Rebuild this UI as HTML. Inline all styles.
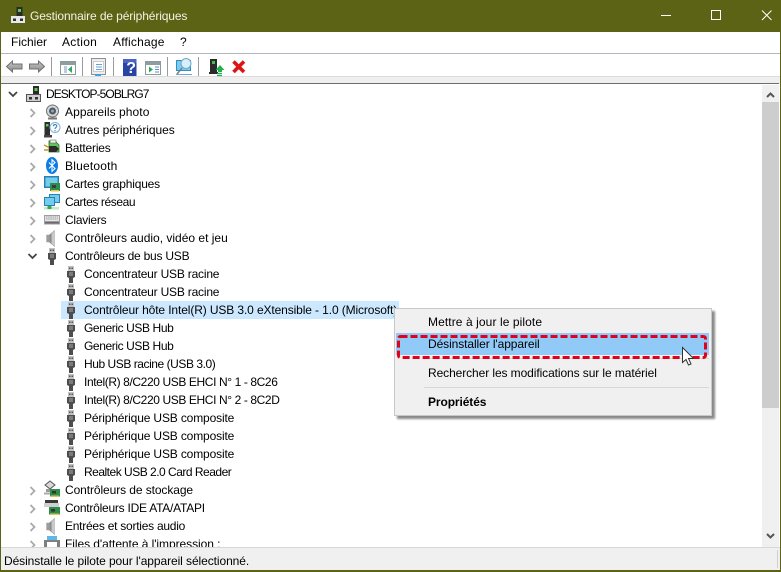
<!DOCTYPE html>
<html lang="fr"><head><meta charset="utf-8"><title>Gestionnaire de périphériques</title>
<style>
*{box-sizing:border-box}
html,body{margin:0;padding:0;width:781px;height:572px;overflow:hidden;background:#fff}
body{position:relative;font:12px/16px "Liberation Sans",sans-serif;color:#000}
.a{position:absolute}
.t{position:absolute;white-space:nowrap;line-height:16px;height:16px}
svg{position:absolute;overflow:visible}
</style></head><body>
<svg width="0" height="0" style="position:absolute"><defs>
<linearGradient id="ga" x1="0" y1="0" x2="0" y2="1"><stop offset="0" stop-color="#c4c4c4"/><stop offset="1" stop-color="#8c8c8c"/></linearGradient>
<symbol id="usb" viewBox="0 0 16 17"><path d="M5 0h6v6H5z" fill="#c2c2c2"/><path d="M6 1.500h1.500v1.500H6zM8.500 1.500H10v1.500H8.500z" fill="#555"/><path d="M4 5h8v6l-2 1v5H6v-5l-2-1z" fill="#4d4d4d"/><path d="M6 6h4v4H6z" fill="#7b7b7b"/></symbol>
<symbol id="spk" viewBox="0 0 16 18"><path d="M2 5h3v8H2z" fill="#9c9c9c"/><path d="M5 5l6-5v18l-6-5z" fill="#8b8b8b"/><path d="M7.500 3.500L11 .500v17l-3.500-3z" fill="#c9c9c9"/></symbol>
</defs></svg>

<!-- window frame -->
<div class="a" style="left:0;top:0;width:781px;height:32px;background:#5d6314"></div>
<div class="a" style="left:0;top:0;width:1px;height:572px;background:#5d6314"></div>
<div class="a" style="left:780px;top:0;width:1px;height:572px;background:#5d6314"></div>
<div class="a" style="left:0;top:570px;width:781px;height:2px;background:#5d6314"></div>
<svg style="left:10px;top:7px" width="16" height="16"><path d="M6.500 0h6v9h-6z" fill="#2a2a2a"/><path d="M8 2h3v3H8z" fill="#5fc850"/><path d="M1 9h14v7H1z" fill="#e8e8e8"/><path d="M3 11.500h3v2.500H3zM10 11.500h3v2.500h-3z" fill="#333"/></svg>
<div class="t" style="left:30px;top:8px;color:#f2f3e4;letter-spacing:-.12px">Gestionnaire de périphériques</div>
<svg style="left:660px;top:8px" width="110" height="16" fill="none" stroke="#fff"><path d="M1 7.500h10M51.500 2.500h9v9h-9zM102 2.500l9.500 9.500M111.500 2.500l-9.500 9.500"/></svg>

<!-- menu -->
<div class="a" style="left:1px;top:53px;width:779px;height:1px;background:#b5b5c0"></div>
<div class="t" style="left:11px;top:34px">Fichier</div>
<div class="t" style="left:62px;top:34px;letter-spacing:.3px">Action</div>
<div class="t" style="left:113px;top:34px;letter-spacing:.2px">Affichage</div>
<div class="t" style="left:180px;top:34px">?</div>

<!-- toolbar -->
<div class="a" style="left:1px;top:76px;width:779px;height:8px;background:#efefef;border-top:1px solid #dcdcdc"></div>
<div class="a" style="left:1px;top:83px;width:778px;height:1px;background:#6d6d6d"></div>
<svg style="left:0;top:54px" width="260" height="24">
<path d="M6.500 12.500l6-5.500v3h9.500v5h-9.500v3z" fill="url(#ga)" stroke="#707070"/>
<path d="M44.500 12.500l-6-5.500v3H29.500v5h9v3z" fill="url(#ga)" stroke="#707070"/>
<path d="M51.500 3v19M82.500 3v19M113.500 3v19M167.500 3v19M198.500 3v19" stroke="#9a9a9a"/>
<path d="M60.500 7.500h15v13h-15z" fill="#fff" stroke="#8a9a9a"/><path d="M61 8h14v3H61z" fill="#8f9ca0"/><path d="M64 12h3v7h-3z" fill="#bcd"/><path d="M72 12l-4 3.500 4 3.500z" fill="#2fa85a"/>
<path d="M91.500 4.500h14v16h-14z" fill="#eee" stroke="#8f8f8f"/><path d="M93.500 7.500h10v10h-10z" fill="#fff" stroke="#ccc"/><path d="M96 10.500h6M96 13h6M96 15.500h6" stroke="#6a9fd8"/><path d="M95 20h6v2h-6z" fill="#35a4ea"/>
<path d="M123 5h13.500v17H123z" fill="#2a44a4"/><path d="M123 5h13.500v4H123z" fill="#4a66c4"/><text x="126.300" y="19" font-family="Liberation Sans,sans-serif" font-size="16" font-weight="bold" fill="#fff">?</text>
<path d="M145.500 7.500h15v13h-15z" fill="#fff" stroke="#8a9a9a"/><path d="M146 8h14v3h-14z" fill="#8f9ca0"/><path d="M149 12.500l4 3-4 3z" fill="#2fa85a"/><path d="M155 13h4M155 15.500h4M155 18h4" stroke="#5a8fc8"/>
<path d="M176.500 6.500h14v10h-14z" fill="#7fcbf0" stroke="#2f8fc0"/><circle cx="186" cy="9.500" r="5" fill="#d8eefa" stroke="#6fa9c4"/><path d="M182 14l-5 6" stroke="#70808a" stroke-width="1.500"/><path d="M176 20.500h16" stroke="#70a8c8"/>
<path d="M210 5h7v13h-7z" fill="#2b2b2b"/><path d="M212 7h3v3h-3z" fill="#3ec24a"/><path d="M209 18h9v2h-9z" fill="#2b2b2b"/><path d="M220 11l4.500 5H222v2h-4v-2h-2.500z" fill="#22b14c"/><path d="M217 19.500h5M217 21.500h5" stroke="#22b14c" stroke-width="1.200"/>
<path d="M233.500 7.500l10.500 10.500M244 7.500l-10.500 10.500" stroke="#dc1414" stroke-width="3.600"/>
</svg>

<!-- tree -->
<div class="a" style="left:61px;top:301px;width:338px;height:18px;background:#cce8ff"></div>
<svg style="left:9px;top:90px" width="10" height="10"><path d="M0 2l4 4 4-4" fill="none" stroke="#444" stroke-width="1.800"/></svg>
<svg style="left:26px;top:86px" width="16" height="16"><path d="M7 0h6v9H7z" fill="#2a2a2a"/><path d="M8.500 2h3v3h-3z" fill="#5fc850"/><path d="M.5 8.500h14v7H.5z" fill="#cfcfcf" stroke="#555"/><path d="M3 11h3v2.500H3zM9 11h3v2.500H9z" fill="#333"/></svg>
<div class="t" style="left:46px;top:86px;letter-spacing:-.93px">DESKTOP-5OBLRG7</div>

<!-- chevrons -->
<svg style="left:27px;top:104px" width="10" height="450"><g fill="none" stroke="#aaa" stroke-width="1.800"><path d="M3.500 5l4 4-4 4M3.500 23l4 4-4 4M3.500 41l4 4-4 4M3.500 59l4 4-4 4M3.500 77l4 4-4 4M3.500 95l4 4-4 4M3.500 113l4 4-4 4M3.500 131l4 4-4 4M3.500 383l4 4-4 4M3.500 401l4 4-4 4M3.500 419l4 4-4 4M3.500 437l4 4-4 4"/></g><path d="M1.500 150l4 4 4-4" fill="none" stroke="#444" stroke-width="1.800"/></svg>

<!-- category icons -->
<svg style="left:44px;top:104px" width="17" height="16"><circle cx="8.500" cy="7" r="6" fill="#d6d6d6" stroke="#707070"/><circle cx="8.500" cy="7" r="3.500" fill="#4a5a66"/><circle cx="8.500" cy="7" r="1.500" fill="#8fa5b5"/><path d="M4 13.500h9v2H4z" fill="#777"/></svg>
<svg style="left:44px;top:122px" width="17" height="16"><path d="M.5 0H6v13H.5z" fill="#2d2d2d"/><path d="M2 2h2.500v2.500H2z" fill="#5fc850"/><path d="M0 13h8v2.500H0z" fill="#444"/><circle cx="11" cy="5.500" r="5" fill="#fff" stroke="#7ab3d8"/><path d="M9.300 4.300c0-2.300 3.500-2.300 3.500-.2 0 1.300-1.800 1.300-1.800 2.900M11 8v1.200" fill="none" stroke="#3f7fb8" stroke-width="1.100"/></svg>
<svg style="left:44px;top:139px" width="17" height="17"><path d="M5 2l7 1 3 3v7H5z" fill="#5fc65a" stroke="#2f6b2f" stroke-width=".8"/><path d="M6 1h6v3H6z" fill="#e8f5e0" stroke="#555" stroke-width=".6"/><path d="M0 6l6 3M0 11h6" stroke="#c09a20" stroke-width="1.500"/><path d="M5 7h7l3 3-3 3H5z" fill="#2b2b2b"/></svg>
<svg style="left:46px;top:157px" width="13" height="17"><ellipse cx="6" cy="8.500" rx="6" ry="8.500" fill="#0a7ee6"/><path d="M3 5.500l6 6-3 2.800V2.700l3 2.800-6 6" fill="none" stroke="#fff" stroke-width="1.100"/></svg>
<svg style="left:44px;top:176px" width="17" height="16"><path d="M0 0h15v12H0z" fill="#2a82b4"/><path d="M1.500 1.500h12v9h-12z" fill="#75cdee"/><path d="M6 12h3v2H6z" fill="#888"/><path d="M6 7h10v8H6z" fill="#2e8d4a"/><path d="M8 9h4v3H8z" fill="#3b3b3b"/><path d="M7 14h8v1.500H7z" fill="#e3c34d"/></svg>
<svg style="left:44px;top:194px" width="17" height="17"><path d="M5 0h11v9H5z" fill="#2a82b4"/><path d="M6 1h9v7H6z" fill="#75cdee"/><path d="M0 3h11v9H0z" fill="#2a82b4"/><path d="M1 4h9v7H1z" fill="#75cdee"/><path d="M0 13h15v2.500H0z" fill="#c9e8c9"/><path d="M3.500 12h4v3h-4z" fill="#34a853"/></svg>
<svg style="left:44px;top:214px" width="17" height="11"><path d="M0 1h16v9.500H0z" fill="#9d9d9d"/><path d="M1 2h14v5H1z" fill="#e6e6e6"/><path d="M2 3h12M2 5h12" stroke="#999" stroke-dasharray="1.500 .7"/><path d="M1 8h14v1.500H1z" fill="#6a6a6a"/></svg>
<svg style="left:46px;top:230px" width="12" height="17"><use href="#spk" width="16" height="17" x="-2"/></svg>
<svg style="left:44px;top:248px" width="16" height="17"><use href="#usb" width="16" height="17"/></svg>
<svg style="left:44px;top:481px" width="17" height="17"><path d="M1 4l5-4 5 4-5 4z" fill="#d8d8d8" stroke="#555"/><path d="M2 8h5v3H2z" fill="#999"/><path d="M0 11.500h6v2H0z" fill="#aaa"/><path d="M6 8h10v7.500H6z" fill="#2e8d4a"/><path d="M8 10h4v2.500H8z" fill="#333"/><path d="M7 14.500h8v1.500H7z" fill="#e3c34d"/></svg>
<svg style="left:44px;top:499px" width="17" height="17"><path d="M1 1h13v3H1z" fill="#3a3a3a"/><path d="M0 4h15v4H0z" fill="#cfcfcf"/><path d="M5 8h11v7.500H5z" fill="#2e8d4a"/><path d="M7 10h4v2.500H7z" fill="#333"/><path d="M6 14.500h9v1.500H6z" fill="#e3c34d"/></svg>
<svg style="left:46px;top:518px" width="12" height="17"><use href="#spk" width="16" height="17" x="-2"/></svg>
<svg style="left:44px;top:536px" width="16" height="11"><path d="M3 0h10v4H3z" fill="#5cb8e8"/><path d="M0 4h16v7H0z" fill="#7f7f7f"/><path d="M3 6h10v5H3z" fill="#fff"/></svg>

<!-- usb child icons -->
<svg style="left:63px;top:266px" width="16" height="216"><use href="#usb" y="0" width="16" height="17"/><use href="#usb" y="18" width="16" height="17"/><use href="#usb" y="36" width="16" height="17"/><use href="#usb" y="54" width="16" height="17"/><use href="#usb" y="72" width="16" height="17"/><use href="#usb" y="90" width="16" height="17"/><use href="#usb" y="108" width="16" height="17"/><use href="#usb" y="126" width="16" height="17"/><use href="#usb" y="144" width="16" height="17"/><use href="#usb" y="162" width="16" height="17"/><use href="#usb" y="180" width="16" height="17"/><use href="#usb" y="198" width="16" height="17"/></svg>

<div class="t" style="left:65px;top:104px;letter-spacing:.07px">Appareils photo</div>
<div class="t" style="left:65px;top:122px;letter-spacing:-.05px">Autres périphériques</div>
<div class="t" style="left:65px;top:140px;letter-spacing:-.2px">Batteries</div>
<div class="t" style="left:65px;top:158px;letter-spacing:.2px">Bluetooth</div>
<div class="t" style="left:65px;top:176px;letter-spacing:-.18px">Cartes graphiques</div>
<div class="t" style="left:65px;top:194px;letter-spacing:-.4px">Cartes réseau</div>
<div class="t" style="left:65px;top:212px;letter-spacing:-.25px">Claviers</div>
<div class="t" style="left:65px;top:230px">Contrôleurs audio, vidéo et jeu</div>
<div class="t" style="left:65px;top:248px;letter-spacing:-.23px">Contrôleurs de bus USB</div>
<div class="t" style="left:84px;top:266px;letter-spacing:-.2px">Concentrateur USB racine</div>
<div class="t" style="left:84px;top:284px;letter-spacing:-.2px">Concentrateur USB racine</div>
<div class="t" style="left:84px;top:302px;letter-spacing:-.115px">Contrôleur hôte Intel(R) USB 3.0 eXtensible - 1.0 (Microsoft)</div>
<div class="t" style="left:84px;top:320px;letter-spacing:-.4px">Generic USB Hub</div>
<div class="t" style="left:84px;top:338px;letter-spacing:-.4px">Generic USB Hub</div>
<div class="t" style="left:84px;top:356px;letter-spacing:-.45px">Hub USB racine (USB 3.0)</div>
<div class="t" style="left:84px;top:374px;letter-spacing:-.39px">Intel(R) 8/C220 USB EHCI N° 1 - 8C26</div>
<div class="t" style="left:84px;top:392px;letter-spacing:-.39px">Intel(R) 8/C220 USB EHCI N° 2 - 8C2D</div>
<div class="t" style="left:84px;top:410px;letter-spacing:-.15px">Périphérique USB composite</div>
<div class="t" style="left:84px;top:428px;letter-spacing:-.15px">Périphérique USB composite</div>
<div class="t" style="left:84px;top:446px;letter-spacing:-.15px">Périphérique USB composite</div>
<div class="t" style="left:84px;top:464px;letter-spacing:-.5px">Realtek USB 2.0 Card Reader</div>
<div class="t" style="left:65px;top:482px;letter-spacing:-.09px">Contrôleurs de stockage</div>
<div class="t" style="left:65px;top:500px;letter-spacing:-.24px">Contrôleurs IDE ATA/ATAPI</div>
<div class="t" style="left:65px;top:518px;letter-spacing:-.25px">Entrées et sorties audio</div>
<div class="t" style="left:65px;top:536px;height:11px;overflow:hidden;letter-spacing:-.06px">Files d'attente à l'impression :</div>

<!-- scrollbar -->
<div class="a" style="left:762px;top:85px;width:17px;height:462px;background:#f0f0f0"></div>
<div class="a" style="left:762px;top:102px;width:17px;height:306px;background:#cdcdcd"></div>
<svg style="left:762px;top:85px" width="17" height="462" fill="none" stroke="#555" stroke-width="2"><path d="M5 12l3.500-3.500L12 12M5 449l3.500 3.500L12 449"/></svg>

<!-- status bar -->
<div class="a" style="left:1px;top:547px;width:779px;height:23px;background:#f0f0f0;border-top:1px solid #d7d7d7"></div>
<div class="a" style="left:777px;top:550px;width:1px;height:18px;background:#d0d0d0"></div>
<div class="t" style="left:4px;top:553px;letter-spacing:-.08px">Désinstalle le pilote pour l'appareil sélectionné.</div>

<!-- context menu -->
<div class="a" style="left:394px;top:308px;width:318px;height:108px;background:#f0f0f0;border:1px solid #c8c8c8;box-shadow:3px 3px 2px #8a8a8a"></div>
<div class="a" style="left:396px;top:333px;width:313px;height:22px;background:#91c9f7"></div>
<div class="a" style="left:424px;top:358px;width:285px;height:1px;background:#d7d7d7"></div>
<div class="a" style="left:424px;top:387px;width:285px;height:1px;background:#d7d7d7"></div>
<div class="t" style="left:428px;top:314px;letter-spacing:.09px">Mettre à jour le pilote</div>
<div class="t" style="left:428px;top:336px;letter-spacing:-.09px">Désinstaller l'appareil</div>
<div class="t" style="left:428px;top:365px;letter-spacing:-.09px">Rechercher les modifications sur le matériel</div>
<div class="t" style="left:428px;top:394px;font-weight:bold;letter-spacing:-.1px">Propriétés</div>
<svg style="left:397px;top:335px" width="310" height="24"><rect x="1.500" y="1.500" width="307" height="21" rx="2" fill="none" stroke="#e4001b" stroke-width="3" stroke-dasharray="7 3"/></svg>
<svg style="left:682px;top:347px" width="14" height="20"><path d="M.5.500v15l3.500-3 2.500 5.500 2.500-1-2.500-5.500h5z" fill="#fff" stroke="#333"/></svg>
</body></html>
